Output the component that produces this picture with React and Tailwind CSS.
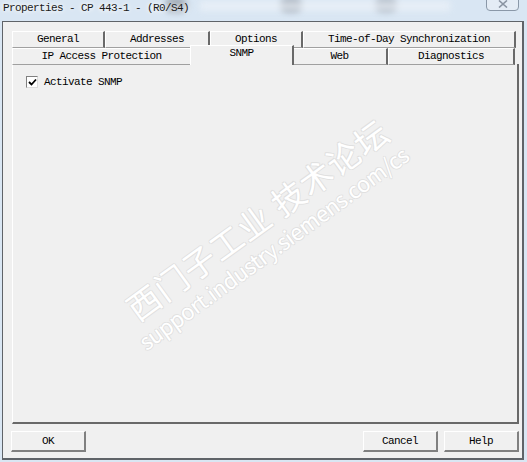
import React from "react";

const raised =
  "border-t border-l border-t-white border-l-white border-r-2 border-r-[#696969] border-b border-b-[#a0a0a0]";

const Tab = ({ label, width, selected = false, noBottom = false }) => (
  <div
    className={`${raised} ${noBottom ? "border-b-0" : ""} flex items-center justify-center bg-[#f0f0f0] text-black ${
      selected ? "h-[20px] -mt-[3px] -mx-[2px] relative z-10 pb-[4px]" : "h-[17px]"
    }`}
    style={{ width }}
  >
    {label}
  </div>
);

const Button = ({ label, className = "" }) => (
  <button
    className={`h-[21px] w-[75px] bg-[#f0f0f0] border-t border-l border-white border-r-2 border-b-2 border-r-[#808080] border-b-[#808080] text-black ${className}`}
  >
    {label}
  </button>
);

export default function App() {
  return (
    <div
      className="relative w-[527px] h-[462px] overflow-hidden bg-[#d9e6f3] text-[11px] tracking-[-0.6px] leading-none"
      style={{ fontFamily: '"Liberation Mono", "Noto Sans CJK SC", monospace' }}
    >
      {/* blurred desktop behind the glass title bar */}
      <div className="absolute left-[165px] top-[-2px] w-[22px] h-[14px] rounded-full bg-[#6f7884] blur-[3px] opacity-60" />
      <div className="absolute left-[280px] top-[-2px] w-[22px] h-[14px] rounded-full bg-[#6f7884] blur-[3px] opacity-60" />
      <div className="absolute left-[375px] top-[-2px] w-[22px] h-[14px] rounded-full bg-[#6f7884] blur-[3px] opacity-50" />
      <div className="absolute left-[200px] top-[1px] w-[250px] h-[10px] bg-[#eef3f9] blur-[3px] opacity-70" />

      {/* title bar */}
      <div className="relative h-[21px] flex items-start pl-[3px] pt-[3px]">
        <span
          className="text-[#1a1a1a]"
          style={{ textShadow: "0 0 4px #fff, 0 0 6px #fff" }}
        >
          Properties - CP 443-1 - (R0/S4)
        </span>
        <div className="absolute left-[486px] top-[-3px] w-[33px] h-[14px] rounded-b-[4px] border border-[#8a98a8] bg-[#e4ecf5] flex items-center justify-center">
          <svg width="10" height="8" viewBox="0 0 10 8">
            <path d="M1 0.5 L9 7.5 M9 0.5 L1 7.5" stroke="#8a94a2" strokeWidth="1.6" />
          </svg>
        </div>
      </div>

      {/* dialog body */}
      <div className="relative ml-[2px] w-[522px] h-[439px] bg-[#f0f0f0] border border-[#5f6368] border-r-2 border-b-2">
        <div className="pl-[9px] pt-[9px]">
          {/* back tab row */}
          <div className="flex">
            <Tab label="General" width={93} />
            <Tab label="Addresses" width={105} />
            <Tab label="Options" width={93} />
            <Tab label="Time-of-Day Synchronization" width={213} />
          </div>
          {/* front tab row */}
          <div className="flex relative">
            <Tab label="IP Access Protection" width={180} />
            <Tab label="SNMP" width={104} selected noBottom />
            <Tab label="Web" width={96} />
            <Tab label="Diagnostics" width={127} />
          </div>
          {/* panel */}
          <div className="w-[507px] h-[360px] border-l border-l-white border-r-2 border-r-[#696969] border-b-2 border-b-[#696969] -mt-[1px] pt-[12px] pl-[13px]">
            <label className="flex items-center gap-[6px]">
              <span className="w-[12px] h-[12px] border border-t-[#808080] border-l-[#808080] border-r-[#dcdcdc] border-b-[#dcdcdc] bg-white flex items-center justify-center">
                <svg width="9" height="9" viewBox="0 0 9 9">
                  <path d="M1 4 L3.5 6.5 L8 1.5" fill="none" stroke="#000" strokeWidth="1.8" />
                </svg>
              </span>
              <span>Activate SNMP</span>
            </label>
          </div>
          {/* buttons */}
          <div className="flex mt-[7px] w-[509px] pr-[2px]">
            <Button label="OK" className="-ml-[1px]" />
            <div className="flex-1" />
            <Button label="Cancel" />
            <Button label="Help" className="ml-[6px]" />
          </div>
        </div>

        {/* watermark */}
        <div
          className="absolute left-[92px] top-[168px] w-[360px] pointer-events-none text-white"
          style={{
            transform: "rotate(-36deg)",
            fontFamily: '"Noto Sans CJK SC", "Liberation Sans", sans-serif',
            textShadow:
              "1px 0 0 #e0e0e0, -1px 0 0 #e0e0e0, 0 1px 0 #e0e0e0, 0 -1px 0 #e0e0e0",
          }}
        >
          <div className="text-[33px] tracking-[1px] leading-[38px] whitespace-nowrap pl-[10px]">
            西门子工业&nbsp;技术论坛
          </div>
          <div className="text-[22px] tracking-[-0.5px] leading-[26px] whitespace-nowrap">
            support.industry.siemens.com/cs
          </div>
        </div>
      </div>
    </div>
  );
}
